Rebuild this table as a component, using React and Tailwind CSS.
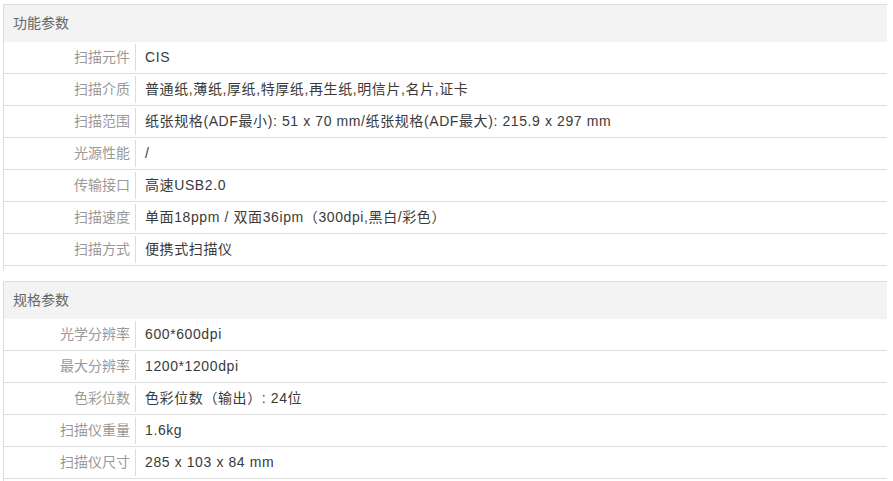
import React from "react";

const sections = [
  {
    title: "功能参数",
    rows: [
      ["扫描元件", "CIS"],
      ["扫描介质", "普通纸,薄纸,厚纸,特厚纸,再生纸,明信片,名片,证卡"],
      ["扫描范围", "纸张规格(ADF最小): 51 x 70 mm/纸张规格(ADF最大): 215.9 x 297 mm"],
      ["光源性能", "/"],
      ["传输接口", "高速USB2.0"],
      ["扫描速度", "单面18ppm / 双面36ipm（300dpi,黑白/彩色）"],
      ["扫描方式", "便携式扫描仪"],
    ],
  },
  {
    title: "规格参数",
    rows: [
      ["光学分辨率", "600*600dpi"],
      ["最大分辨率", "1200*1200dpi"],
      ["色彩位数", "色彩位数（输出）: 24位"],
      ["扫描仪重量", "1.6kg"],
      ["扫描仪尺寸", "285 x 103 x 84 mm"],
    ],
  },
];

function Section({ title, rows }) {
  return (
    <div className="border-t border-l border-[#dddddd] pb-[5px]">
      <div className="h-[37px] bg-[#f3f3f3] flex items-center pl-[9px] text-[14px] text-[#666666]">
        {title}
      </div>
      {rows.map(([k, v]) => (
        <div key={k} className="h-[32px] border-b border-[#dddddd] flex items-center">
          <div className="w-[132px] h-[27px] shrink-0 border-r border-[#dddddd] flex items-center justify-end pr-[5px] text-[14px] text-[#999999]">
            {k}
          </div>
          <div className="pl-[9px] text-[14px] tracking-[0.6px] text-[#3a3a3a] whitespace-nowrap">{v}</div>
        </div>
      ))}
    </div>
  );
}

export default function App() {
  return (
    <div
      className="w-[893px] h-[481px] bg-white overflow-hidden pt-[4px] pl-[3px]"
      style={{ fontFamily: '"Liberation Sans", "Noto Sans CJK SC", sans-serif' }}
    >
      <div className="w-[884px] flex flex-col gap-[10px]">
        {sections.map((s) => (
          <Section key={s.title} {...s} />
        ))}
      </div>
    </div>
  );
}
